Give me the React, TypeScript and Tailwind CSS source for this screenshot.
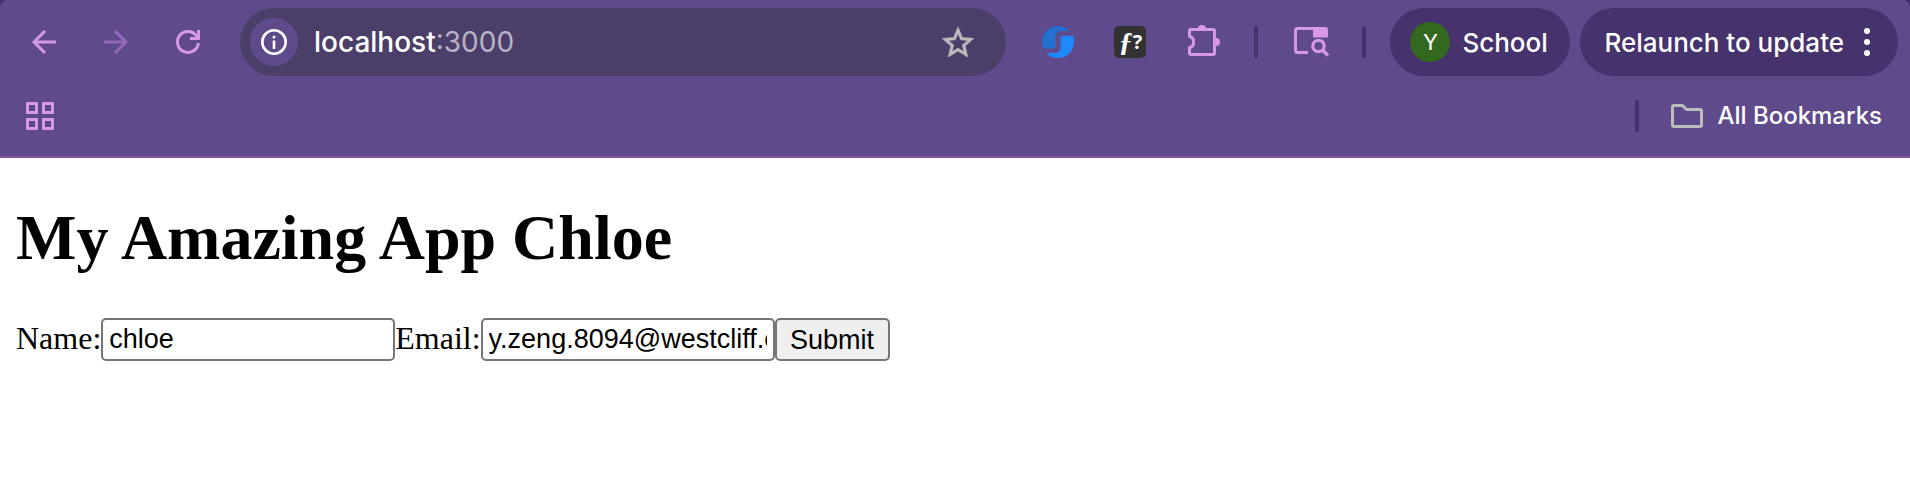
import { useState } from "react";
import type { ReactNode } from "react";

function IconButton({ label, children }: { label: string; children: ReactNode }) {
  return (
    <button type="button" aria-label={label} className="flex size-8 shrink-0 items-center justify-center">
      {children}
    </button>
  );
}

function Separator() {
  return <div className="h-8 w-1 shrink-0 rounded-full bg-[#46326d]" />;
}

function BackIcon() {
  return (
    <svg viewBox="0 0 32 32" className="size-8" fill="none" stroke="currentColor" strokeWidth="3">
      <path d="M28 16H6M17 5L6 16L17 27" />
    </svg>
  );
}

function ForwardIcon() {
  return (
    <svg viewBox="0 0 32 32" className="size-8" fill="none" stroke="currentColor" strokeWidth="3">
      <path d="M4 16H26M15 5L26 16L15 27" />
    </svg>
  );
}

function ReloadIcon() {
  return (
    <svg viewBox="0 0 32 32" className="size-8" fill="none" stroke="currentColor" strokeWidth="3">
      <path d="M26.4 17A10.5 10.5 0 1 1 24.5 9.8L26 12" />
      <path d="M26.5 4V12.5H18" />
    </svg>
  );
}

function AppsIcon() {
  return (
    <svg viewBox="0 0 28 28" className="size-7" fill="none" stroke="currentColor" strokeWidth="3">
      <path d="M1.5 1.5h9v9h-9zM17.5 1.5h9v9h-9zM1.5 17.5h9v9h-9zM17.5 17.5h9v9h-9z" />
    </svg>
  );
}

function InfoIcon() {
  return (
    <svg viewBox="0 0 26 26" className="size-[26px]" fill="none" stroke="currentColor">
      <circle cx="13" cy="13" r="11.7" strokeWidth="2.6" />
      <path d="M13 11.5V20" strokeWidth="2.6" />
      <circle cx="13" cy="8" r="1.5" fill="currentColor" stroke="none" />
    </svg>
  );
}

function StarIcon() {
  return (
    <svg
      viewBox="2 2 20 19"
      className="h-[30px] w-8"
      fill="currentColor"
      stroke="currentColor"
      strokeWidth="0.4"
    >
      <path d="M22 9.24l-7.19-.62L12 2 9.19 8.63 2 9.24l5.46 4.73L5.82 21 12 17.27 18.18 21l-1.63-7.03L22 9.24zM12 15.4l-3.76 2.27 1-4.28-3.32-2.88 4.38-.38L12 6.1l1.71 4.04 4.38.38-3.32 2.88 1 4.28L12 15.4z" />
    </svg>
  );
}

function SwirlIcon() {
  return (
    <svg viewBox="0 0 32 32" className="size-8">
      <path d="M27.5 5C24.5 1.8 20.6 0 16 0C7 0 0 7 0 16C0 18.5 .5 20.7 1.5 22.5H11C13 22.5 13.7 21.7 13.7 19.7V11C13.7 7 15.7 5 19.5 5Z" fill="#2470cf" />
      <path d="M4.5 27C7.5 30.2 11.4 32 16 32C25 32 32 25 32 16C32 13.5 31.5 11.5 30.6 9.8H21C19 9.8 18.5 10.5 18.5 12.5V21C18.5 25 16.5 27 12.7 27Z" fill="#1e88ff" />
    </svg>
  );
}

function PuzzleIcon() {
  return (
    <svg viewBox="-2 2 32 32" className="size-8 overflow-visible">
      <path
        d="M3 5.5H25Q26.5 5.5 26.5 7V29Q26.5 30.5 25 30.5H3Q1.5 30.5 1.5 29V23.5C7 22.5 7 13.5 1.5 12.5V7Q1.5 5.5 3 5.5Z"
        fill="none"
        stroke="currentColor"
        strokeWidth="3"
        strokeLinejoin="round"
      />
      <path d="M10 5A4 4 0 0 1 18 5ZM28 14A4 4 0 0 1 28 22Z" fill="currentColor" />
    </svg>
  );
}

function PanelSearchIcon() {
  return (
    <svg viewBox="0 0 32 30" className="h-[30px] w-8 overflow-visible" fill="none" stroke="currentColor">
      <path d="M14 25.5H3.5Q1.5 25.5 1.5 23.5V3.5Q1.5 1.5 3.5 1.5H31" strokeWidth="3" />
      <path d="M19 0H31.5Q34 0 34 2.5V10.5H19Z" fill="currentColor" stroke="none" />
      <circle cx="24.5" cy="19" r="5.7" strokeWidth="3.2" />
      <path d="M28.5 23L34 28.5" strokeWidth="3.6" />
    </svg>
  );
}

function FolderIcon() {
  return (
    <svg viewBox="0 0 32 24" className="h-6 w-8 text-[#bcbcbc]" fill="none" stroke="currentColor" strokeWidth="3" strokeLinejoin="round">
      <path d="M1.5 3Q1.5 1.5 3 1.5H11.5L15.5 5.5H29Q30.5 5.5 30.5 7V21Q30.5 22.5 29 22.5H3Q1.5 22.5 1.5 21Z" />
    </svg>
  );
}

function MenuDots() {
  return (
    <svg viewBox="0 0 6 28" className="h-7 w-[6px]" fill="currentColor">
      <circle cx="3" cy="3" r="3" />
      <circle cx="3" cy="14" r="3" />
      <circle cx="3" cy="25" r="3" />
    </svg>
  );
}

function BrowserBar() {
  return (
    <div className="bg-[#46326d]">
      <header className="rounded-t-lg border-b-2 border-[#7c58a4] bg-[#5f4a8b] pt-2 font-['Inter',sans-serif] text-white">
        <div className="flex items-center pr-3">
          <nav className="flex shrink-0 gap-10 pr-9 pl-7 text-[#d898e8]">
            <IconButton label="Back"><BackIcon /></IconButton>
            <button type="button" disabled aria-label="Forward" className="size-8 text-[#9468b8]">
              <ForwardIcon />
            </button>
            <IconButton label="Reload"><ReloadIcon /></IconButton>
          </nav>
          <div className="flex h-17 min-w-0 flex-1 items-center rounded-full bg-[#4b3e69] pr-8 pl-[10px]">
            <button type="button" aria-label="View site information" className="flex size-12 shrink-0 items-center justify-center rounded-full bg-[#5f4a8b]">
              <InfoIcon />
            </button>
            <div className="min-w-0 flex-1 truncate pl-4 text-[28px] leading-9">
              <span className="font-medium">localhost</span>
              <span className="text-[#b9b2c6]">:3000</span>
            </div>
            <span className="flex text-[#bcbcbc]">
              <IconButton label="Bookmark this tab"><StarIcon /></IconButton>
            </span>
          </div>
          <div className="flex shrink-0 items-center gap-9 pr-6 pl-9 text-[#d898e8]">
            <div className="flex gap-10">
              <IconButton label="Swirl extension"><SwirlIcon /></IconButton>
              <button type="button" className="flex size-8 items-center justify-center rounded-[5px] bg-[#323232] text-[28px] leading-8 font-bold text-white">
                <i className="font-['Liberation_Serif',serif]">ƒ</i>
                <span className="font-['Open_Sans',sans-serif] text-xl">?</span>
              </button>
              <IconButton label="Extensions"><PuzzleIcon /></IconButton>
            </div>
            <Separator />
            <button type="button" aria-label="Search side panel"><PanelSearchIcon /></button>
            <Separator />
          </div>
          <div className="flex shrink-0 gap-[10px] font-medium">
            <button type="button" className="flex h-17 w-45 items-center gap-3 rounded-full bg-[#46326d] pl-5 text-[26px]">
              <span className="flex size-10 items-center justify-center rounded-full bg-[#33691e] text-[22px] font-normal">Y</span>
              School
            </button>
            <button type="button" className="flex h-17 items-center gap-5 rounded-full bg-[#46326d] pr-7 pl-6 text-[26px]">
              Relaunch to update
              <MenuDots />
            </button>
          </div>
        </div>
        <div className="flex h-20 items-center justify-between pr-7 pl-[26px]">
          <button type="button" aria-label="Apps" className="text-[#d898e8]"><AppsIcon /></button>
          <div className="flex items-center gap-8">
            <Separator />
            <button type="button" className="flex items-center gap-[14px] text-2xl font-medium">
              <FolderIcon />
              All Bookmarks
            </button>
          </div>
        </div>
      </header>
    </div>
  );
}

function SignupForm() {
  const [name, setName] = useState("chloe");
  const [email, setEmail] = useState("y.zeng.8094@westcliff.edu");
  return (
    <form className="flex items-start text-[32px] leading-10" onSubmit={(e) => e.preventDefault()}>
      <label htmlFor="name">Name:</label>
      <input
        id="name"
        value={name}
        onChange={(e) => setName(e.target.value)}
        className="h-[43px] w-[294px] rounded-[5px] border-2 border-[#767676] bg-white px-[6px] font-['Liberation_Sans',sans-serif] text-[27px]"
      />
      <label htmlFor="email">Email:</label>
      <input
        id="email"
        value={email}
        onChange={(e) => setEmail(e.target.value)}
        className="h-[43px] w-[294px] rounded-[5px] border-2 border-[#767676] bg-white px-[6px] font-['Liberation_Sans',sans-serif] text-[27px]"
      />
      <button
        type="submit"
        className="h-[43px] w-[115px] rounded-[5px] border-2 border-[#767676] bg-[#efefef] font-['Liberation_Sans',sans-serif] text-[27px]"
      >
        Submit
      </button>
    </form>
  );
}

export default function App() {
  return (
    <div className="min-h-screen bg-white">
      <BrowserBar />
      <main className="px-4 pt-11 font-['Liberation_Serif',serif] text-black">
        <h1 className="mb-11 text-[64px] leading-[72px] font-bold">My Amazing App Chloe</h1>
        <SignupForm />
      </main>
    </div>
  );
}
